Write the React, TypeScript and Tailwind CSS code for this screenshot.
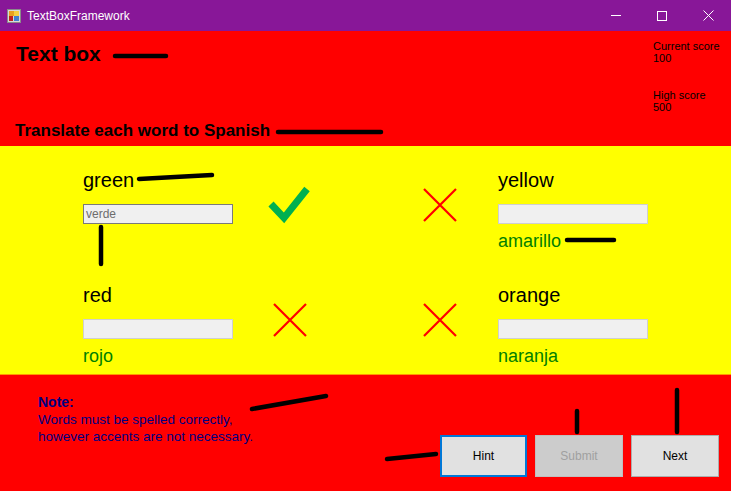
import { ReactNode } from "react";

const font = { fontFamily: '"Liberation Sans", Arial, sans-serif' };

function Check() {
  return (
    <svg width="44" height="42" viewBox="0 0 44 42">
      <path d="M4 21 L17 35 L40 6" fill="none" stroke="#00b050" strokeWidth="7" />
    </svg>
  );
}

function Cross() {
  return (
    <svg width="36" height="36" viewBox="0 0 36 36">
      <path d="M2 2 L34 34 M34 2 L2 34" stroke="#ff0000" strokeWidth="2.2" />
    </svg>
  );
}

function WordItem({
  word,
  value,
  answer,
  focused,
}: {
  word: string;
  value?: string;
  answer?: string;
  focused?: boolean;
}) {
  return (
    <div className="w-[150px] flex flex-col">
      <div className="text-[20px] leading-[24px] text-black">{word}</div>
      <div
        className={
          "mt-[12px] h-[20px] bg-[#f0f0f0] border px-[2px] text-[12px] leading-[18px] text-[#6d6d6d] " +
          (focused ? "border-[#7a7a7a]" : "border-[#cfcfcf]")
        }
      >
        {value}
      </div>
      <div className="mt-[5px] h-[24px] text-[18px] leading-[24px] text-[#008000]">{answer}</div>
    </div>
  );
}

function Row({ children }: { children: ReactNode }) {
  return <div className="flex items-start pl-[83px]">{children}</div>;
}

export default function App() {
  return (
    <div className="w-[731px] h-[491px] flex flex-col relative overflow-hidden" style={font}>
      {/* Title bar */}
      <div className="h-[31px] bg-[#881798] flex items-center text-white">
        <svg width="14" height="14" viewBox="0 0 14 14" className="ml-[7px]">
          <rect x="0.5" y="0.5" width="13" height="13" fill="#d8d8d8" stroke="#8a8a8a" />
          <rect x="2" y="2" width="5" height="5" fill="#e8a020" />
          <rect x="7" y="2" width="5" height="5" fill="#f4d040" />
          <rect x="2" y="7" width="4" height="5" fill="#c02020" />
          <rect x="7" y="7" width="5" height="5" fill="#4080d0" />
        </svg>
        <span className="ml-[6px] text-[12px]">TextBoxFramework</span>
        <div className="ml-auto flex h-full">
          <div className="w-[46px] flex items-center justify-center">
            <div className="w-[10px] h-[1px] bg-white" />
          </div>
          <div className="w-[46px] flex items-center justify-center">
            <div className="w-[10px] h-[10px] border border-white" />
          </div>
          <div className="w-[46px] flex items-center justify-center">
            <svg width="11" height="11" viewBox="0 0 11 11">
              <path d="M0.5 0.5 L10.5 10.5 M10.5 0.5 L0.5 10.5" stroke="white" strokeWidth="1" />
            </svg>
          </div>
        </div>
      </div>

      {/* Header */}
      <div className="h-[115px] bg-[#ff0000] flex justify-between">
        <div className="flex flex-col justify-between pl-[15px] pt-[10px] pb-[5px]">
          <div className="pl-[1px] text-[21px] leading-[25px] font-bold text-black">Text box</div>
          <div className="text-[17px] leading-[20px] font-bold text-black">Translate each word to Spanish</div>
        </div>
        <div className="w-[78px] pt-[9px] text-[11px] leading-[12px] text-black">
          <div>Current score</div>
          <div>100</div>
          <div className="mt-[25px]">High score</div>
          <div>500</div>
        </div>
      </div>

      {/* Words */}
      <div className="h-[229px] bg-[#ffff00] border-b border-[#ff9900] flex flex-col gap-[30px] pt-[22px]">
        <Row>
          <WordItem word="green" value="verde" focused />
          <div className="ml-[34px] mt-[15px]">
            <Check />
          </div>
          <div className="ml-[111px] mt-[19px]">
            <Cross />
          </div>
          <div className="ml-[40px]">
            <WordItem word="yellow" answer="amarillo" />
          </div>
        </Row>
        <Row>
          <WordItem word="red" answer="rojo" />
          <div className="ml-[39px] mt-[19px]">
            <Cross />
          </div>
          <div className="ml-[114px] mt-[19px]">
            <Cross />
          </div>
          <div className="ml-[40px]">
            <WordItem word="orange" answer="naranja" />
          </div>
        </Row>
      </div>

      {/* Footer */}
      <div className="flex-1 bg-[#ff0000] flex">
        <div className="pl-[38px] pt-[19px] text-[13.5px] leading-[17px] text-[#000080]">
          <div className="font-bold text-[14px]">Note:</div>
          <div>Words must be spelled correctly,</div>
          <div>however accents are not necessary.</div>
        </div>
        <div className="ml-auto mr-[12px] mt-[60px] flex gap-[8px] text-[12px]">
          <button className="w-[87px] h-[42px] bg-[#e1e1e1] border-2 border-[#0078d7] text-black">Hint</button>
          <button className="w-[88px] h-[42px] bg-[#cccccc] border border-[#bfbfbf] text-[#a0a0a0]">Submit</button>
          <button className="w-[88px] h-[42px] bg-[#e1e1e1] border border-[#adadad] text-black">Next</button>
        </div>
      </div>

      {/* Annotation marks */}
      <svg className="absolute left-0 top-0 pointer-events-none" width="731" height="491">
        <g stroke="black" strokeWidth="4.5" strokeLinecap="round" fill="none">
          <path d="M115 56 L166 56" />
          <path d="M278 132 L381 132" />
          <path d="M139 179 L175 177 L212 175" />
          <path d="M101 227 L101 264" />
          <path d="M567 240 L614 240" />
          <path d="M252 409 L326 396" />
          <path d="M387 459 L436 454" />
          <path d="M577 411 L577 432" />
          <path d="M677 390 L677 432" />
        </g>
      </svg>
    </div>
  );
}
